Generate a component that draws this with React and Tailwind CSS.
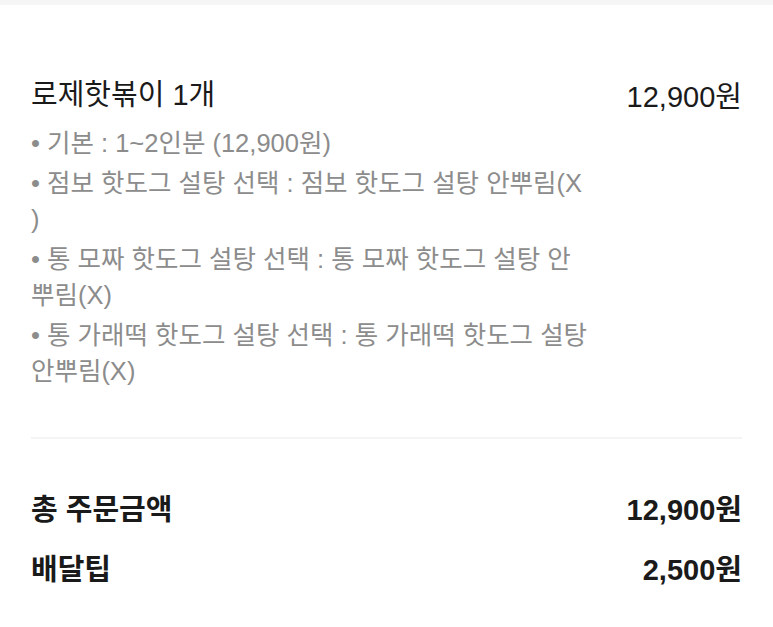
import React from 'react';

// each option as the lines it wraps into on the order sheet
const options = [
  ['• 기본 : 1~2인분 (12,900원)'],
  ['• 점보 핫도그 설탕 선택 : 점보 핫도그 설탕 안뿌림(X', ')'],
  ['• 통 모짜 핫도그 설탕 선택 : 통 모짜 핫도그 설탕 안', '뿌림(X)'],
  ['• 통 가래떡 핫도그 설탕 선택 : 통 가래떡 핫도그 설탕', '안뿌림(X)'],
];

const App = () => {
  return (
    <div
      className="min-h-screen bg-white"
      style={{ fontFamily: '"Liberation Sans", "Noto Sans CJK KR", sans-serif' }}
    >
      <div className="h-[5px] bg-[#f5f5f5]" />

      <div className="px-[31px] pt-[72px]">
        <div className="flex justify-between items-start">
          <div className="w-[560px]">
            <h3 className="text-[29px] leading-[36px] text-[#1a1a1a]">로제핫볶이 1개</h3>
            <ul className="mt-[12px] flex flex-col gap-[4px]">
              {options.map((lines) => (
                <li key={lines[0]} className="flex flex-col text-[25.5px] leading-[36px] text-[#8c8c8c]">
                  {lines.map((line) => (
                    <span key={line} className="whitespace-nowrap">{line}</span>
                  ))}
                </li>
              ))}
            </ul>
          </div>
          <span className="text-[29px] leading-[36px] text-[#1a1a1a] pt-[2px]">12,900원</span>
        </div>

        <div className="mt-[48px] h-[2px] bg-[#f4f4f4]" />

        <div className="pt-[53px] flex flex-col gap-[24px]">
          <div className="flex justify-between items-center">
            <span className="text-[29px] leading-[36px] font-bold text-[#1a1a1a]">총 주문금액</span>
            <span className="text-[29px] leading-[36px] font-bold text-[#1a1a1a]">12,900원</span>
          </div>
          <div className="flex justify-between items-center">
            <span className="text-[29px] leading-[36px] font-bold text-[#1a1a1a]">배달팁</span>
            <span className="text-[29px] leading-[36px] font-bold text-[#1a1a1a]">2,500원</span>
          </div>
        </div>
      </div>
    </div>
  );
};

export default App;
